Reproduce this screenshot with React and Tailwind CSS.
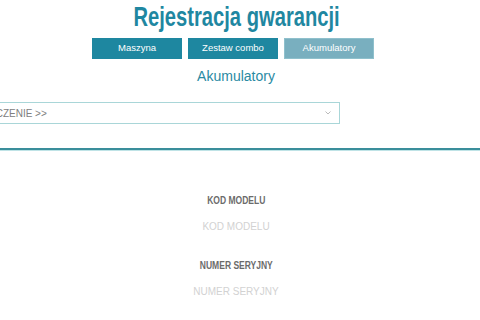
export default function App() {
    const tabs = [
        { label: "Maszyna", active: false },
        { label: "Zestaw combo", active: false },
        { label: "Akumulatory", active: true },
    ];

    return (
        <div className="w-[480px] h-[320px] overflow-hidden bg-white font-['Liberation_Sans',Arial,sans-serif]">
            <h1 className="pt-[2px] text-center text-[28px] leading-[30px] font-bold text-[#1f87a1]">
                <span className="inline-block scale-x-[0.72] pr-[10px]">Rejestracja gwarancji</span>
            </h1>
            <div className="mt-[6px] flex justify-center gap-[6px] pr-[14px]">
                {tabs.map((tab) => (
                    <button
                        key={tab.label}
                        type="button"
                        className={
                            tab.active
                                ? "w-[90px] h-[21px] bg-[#79afbf] border border-[#8fc0cc] text-white text-[9.5px]"
                                : "w-[90px] h-[21px] bg-[#1e87a0] text-white text-[9.5px]"
                        }
                    >
                        {tab.label}
                    </button>
                ))}
            </div>
            <p className="mt-[9px] text-center text-[14px] leading-[16px] text-[#2a8aa3] pr-[8px]">
                Akumulatory
            </p>
            <div className="mt-[18px] ml-[-58px] w-[398px] h-[22px] border border-[#a9d6d8] flex items-center justify-between pl-[6px] pr-[8px]">
                <span className="text-[10px] text-[#808080]">PRZEZNACZENIE &gt;&gt;</span>
                <svg width="6" height="4" viewBox="0 0 6 4" className="text-[#aaa]">
                    <path d="M0.5 0.5 L3 3 L5.5 0.5" fill="none" stroke="currentColor" strokeWidth="0.8" />
                </svg>
            </div>
            <div className="mt-[24px] h-[3px] border-t-2 border-[#3a8e9b] bg-[#bfe3e6]" />
            <div className="mt-[43px] pr-[8px] flex flex-col items-center">
                <label className="text-[11.5px] leading-[13px] font-bold text-[#6b6b6b]">
                    <span className="inline-block scale-x-[0.74]">KOD MODELU</span>
                </label>
                <span className="mt-[14px] text-[10px] leading-[12px] text-[#d2d2d2]">KOD MODELU</span>
                <label className="mt-[26px] text-[11.5px] leading-[13px] font-bold text-[#6b6b6b]">
                    <span className="inline-block scale-x-[0.74]">NUMER SERYJNY</span>
                </label>
                <span className="mt-[14px] text-[10px] leading-[12px] text-[#d2d2d2]">NUMER SERYJNY</span>
            </div>
        </div>
    );
}
